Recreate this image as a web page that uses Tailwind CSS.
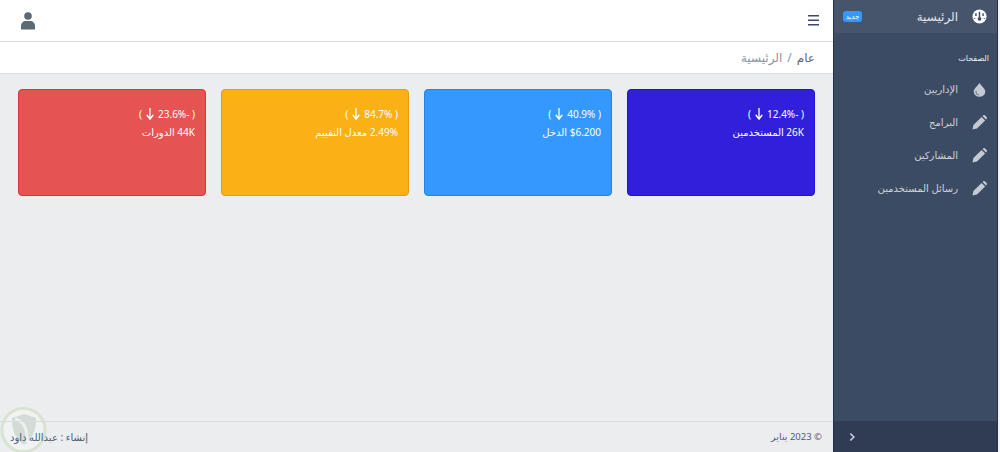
<!DOCTYPE html>
<html lang="ar" dir="rtl">
<head>
    <meta charset="UTF-8">
    <title>لوحة التحكم</title>
    <script src="https://cdn.jsdelivr.net/npm/@tailwindcss/browser@4"></script>
</head>
<body class="h-[452px] w-[1000px] overflow-hidden bg-[#f4f5f7] font-['Noto_Sans','DejaVu_Sans',sans-serif] text-[10px] text-[#3c4b64]">
<div class="relative flex h-full">
    <!-- sidebar -->
    <aside class="mr-[2px] flex h-full w-[165px] shrink-0 flex-col border-x border-[#232f55] bg-[#3c4b64] text-white/75">
        <a class="flex h-[33px] items-center bg-white/5 pr-[10px] pl-[9px] text-[12px] text-white/85">
            <svg class="ml-[14px] h-[15px] w-[15px]" viewBox="0 0 16 16"><circle cx="8" cy="8" r="7.500" fill="#fff"/><path d="M8 8.500V3M4.200 4.500v3M11.800 4.500v3M2.800 9.500v1M13.200 9.500v1" stroke="#3c4b64" stroke-width="1.500"/><circle cx="8" cy="10.500" r="2" fill="#3c4b64"/></svg>
            <span>الرئيسية</span>
            <span class="mr-auto h-[11px] w-[19px] rounded-[3px] bg-[#39f] text-center text-[7px] leading-[11px] text-white">جديد</span>
        </a>
        <div class="mt-[17px] pr-[8px] text-[8px] leading-[16px] text-white/90">الصفحات</div>
        <nav class="mt-[7px] flex flex-col">
            <a class="flex h-[33px] items-center pr-[10px]">
                <svg class="ml-[14px] h-[15px] w-[15px]" viewBox="0 0 16 16" fill="#c5c9d1"><path d="M8 .8c1.800 3.300 6.200 6.300 6.200 9.400a6.200 5.600 0 0 1-12.400 0C1.800 7.100 6.200 4.100 8 .8z"/><path d="M4.500 9.500c-.8 2.400.8 4.200 3 4.300" stroke="#6f7a8c" stroke-width="1.200" fill="none"/></svg>
                <span>الإداريين</span>
            </a>
            <a class="flex h-[33px] items-center pr-[10px]">
                <svg class="ml-[14px] h-[15px] w-[15px]" viewBox="0 0 16 16" fill="#c5c9d1"><path d="M.5 15.500l1-4.800L10.200 2l3.800 3.800-8.700 8.700zM11.200 1l1-.8a1.200 1.200 0 0 1 1.500 0l2.100 2.100a1.200 1.200 0 0 1 0 1.500l-.8 1z"/></svg>
                <span>البرامج</span>
            </a>
            <a class="flex h-[33px] items-center pr-[10px]">
                <svg class="ml-[14px] h-[15px] w-[15px]" viewBox="0 0 16 16" fill="#c5c9d1"><path d="M.5 15.500l1-4.800L10.200 2l3.800 3.800-8.700 8.700zM11.200 1l1-.8a1.200 1.200 0 0 1 1.500 0l2.100 2.100a1.200 1.200 0 0 1 0 1.500l-.8 1z"/></svg>
                <span>المشاركين</span>
            </a>
            <a class="flex h-[33px] items-center pr-[10px]">
                <svg class="ml-[14px] h-[15px] w-[15px]" viewBox="0 0 16 16" fill="#c5c9d1"><path d="M.5 15.500l1-4.800L10.200 2l3.800 3.800-8.700 8.700zM11.200 1l1-.8a1.200 1.200 0 0 1 1.500 0l2.100 2.100a1.200 1.200 0 0 1 0 1.500l-.8 1z"/></svg>
                <span>رسائل المستخدمين</span>
            </a>
        </nav>
        <div class="mt-auto flex h-[31px] items-center justify-end bg-[#2f3c54] pl-[15px]">
            <svg class="h-[10px] w-[7px]" viewBox="0 0 8 10" fill="none" stroke="#c5c9d1" stroke-width="2"><path d="M1.500 1l4 4-4 4"/></svg>
        </div>
    </aside>

    <!-- main -->
    <div class="flex w-[833px] shrink-0 flex-col bg-[#ebedef]">
        <header class="flex h-[42px] items-center justify-between border-b border-[#d8dbe0] bg-white pr-[14px] pl-[21px]">
            <svg class="h-[11px] w-[11px]" viewBox="0 0 11 11" fill="#3c4b64"><path d="M0 0h11v1.600H0zM0 4.500h11v1.600H0zM0 9h11v1.600H0z"/></svg>
            <svg class="h-[18px] w-[14px]" viewBox="0 0 14 18" fill="#5c6873"><circle cx="7" cy="4" r="3.800"/><path d="M0 17.500v-3.500c0-3 2.500-5 4.500-5h5c2 0 4.500 2 4.500 5v3.500z"/></svg>
        </header>
        <div class="flex h-[32px] items-center gap-[5px] border-b border-[#d8dbe0] bg-white pr-[18px] text-[12px] text-[#8a93a2]">
            <span class="text-[#5c6873]">عام</span><span>/</span><span>الرئيسية</span>
        </div>
        <main class="grid flex-1 grid-cols-4 content-start gap-[15px] px-[18px] pt-[15px]">
            <div class="h-[107px] rounded-[4px] border border-[#1f12d0] bg-[#321fdb] px-[10px] pt-[15px] text-white">
                <div class="flex h-[18px] items-center">( -12.4% <svg class="mx-[4px] h-[12px] w-[8px]" viewBox="0 0 11 13" preserveAspectRatio="none" fill="none" stroke="#fff" stroke-width="1.800"><path d="M5.500 0v12M1 7.500l4.500 4.500 4.500-4.500"/></svg> )</div>
                <div class="leading-[18px]">26K المستخدمين</div>
            </div>
            <div class="h-[107px] rounded-[4px] border border-[#1f85e6] bg-[#39f] px-[10px] pt-[15px] text-white">
                <div class="flex h-[18px] items-center">( 40.9% <svg class="mx-[4px] h-[12px] w-[8px]" viewBox="0 0 11 13" preserveAspectRatio="none" fill="none" stroke="#fff" stroke-width="1.800"><path d="M5.500 0v12M1 7.500l4.500 4.500 4.500-4.500"/></svg> )</div>
                <div class="leading-[18px]">$6.200 الدخل</div>
            </div>
            <div class="h-[107px] rounded-[4px] border border-[#e09e0e] bg-[#f9b115] px-[10px] pt-[15px] text-white">
                <div class="flex h-[18px] items-center">( 84.7% <svg class="mx-[4px] h-[12px] w-[8px]" viewBox="0 0 11 13" preserveAspectRatio="none" fill="none" stroke="#fff" stroke-width="1.800"><path d="M5.500 0v12M1 7.500l4.500 4.500 4.500-4.500"/></svg> )</div>
                <div class="leading-[18px]">2.49% معدل التقييم</div>
            </div>
            <div class="h-[107px] rounded-[4px] border border-[#d93737] bg-[#e55353] px-[10px] pt-[15px] text-white">
                <div class="flex h-[18px] items-center">( -23.6% <svg class="mx-[4px] h-[12px] w-[8px]" viewBox="0 0 11 13" preserveAspectRatio="none" fill="none" stroke="#fff" stroke-width="1.800"><path d="M5.500 0v12M1 7.500l4.500 4.500 4.500-4.500"/></svg> )</div>
                <div class="leading-[18px]">44K الدورات</div>
            </div>
        </main>
        <footer class="relative z-10 flex h-[31px] items-center justify-between border-t border-[#d8dbe0] pr-[11px] pl-[10px] text-[#4f5d73]">
            <span class="text-[9.500px]">© 2023 يناير</span>
            <span>إنشاء : عبدالله داود</span>
        </footer>
    </div>

    <!-- watermark -->
    <svg class="absolute bottom-[-2px] left-0 h-[48px] w-[48px]" viewBox="0 0 48 48" fill="none">
        <circle cx="23.500" cy="24" r="21.500" stroke="#c9dbb5" stroke-opacity=".55" stroke-width="3" fill="#fff" fill-opacity=".3"/>
        <path d="M24 8l12 4c0 12-3 21-12 27-9-6-12-15-12-27z" fill="#8aa58f" fill-opacity=".3"/>
        <path d="M15 13c8 2 13 9 12 23" stroke="#fff" stroke-opacity=".6" stroke-width="3"/>
    </svg>
</div>
</body>
</html>
